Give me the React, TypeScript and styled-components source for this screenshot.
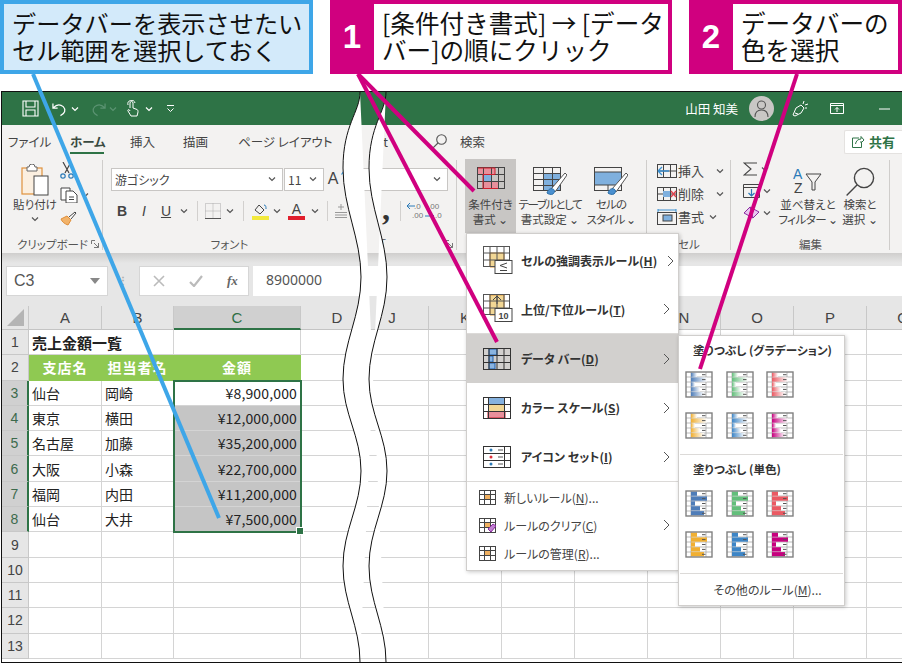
import React from "react";
import styled, { createGlobalStyle, css } from "styled-components";

const Global = createGlobalStyle`
  html, body { margin: 0; padding: 0; background: #fff; }
  body { font-family: "Noto Sans CJK JP", "Noto Sans", sans-serif; }
  * { box-sizing: border-box; }
  svg { flex: none; }
`;

const Page = styled.div`
  position: relative;
  width: 902px;
  height: 663px;
  overflow: hidden;
  background: #fff;
`;

const CalloutBar = styled.header`
  display: flex;
  gap: 17px;
  height: 74px;
  margin-bottom: 17px;
`;
const Note = styled.div`
  width: 313px;
  border: 4px solid #3ea6e8;
  background: #d3eafa;
  padding: 5px 0 0 8px;
  font-size: 24.2px;
  line-height: 27px;
  color: #111;
  white-space: nowrap;
`;
const Step = styled.div<{ $w: number }>`
  width: ${(p) => p.$w}px;
  display: flex;
  background: #d0007f;
  padding: 4px 4px 4px 0;
`;
const StepNum = styled.div`
  width: 44px;
  display: flex;
  align-items: center;
  justify-content: center;
  color: #fff;
  font: 700 33px "Liberation Sans", sans-serif;
`;
const StepText = styled.div`
  flex: 1;
  background: #fff;
  padding: 5px 0 0 8px;
  font-size: 24.6px;
  line-height: 27px;
  color: #111;
  white-space: nowrap;
  overflow: hidden;
`;

const Window = styled.main`
  display: flex;
  height: 572px;
  padding-left: 1px;
`;
const Pane = styled.section<{ $left?: boolean }>`
  display: flex;
  flex-direction: column;
  height: 572px;
  border-top: 1px solid #111;
  border-bottom: 1px solid #111;
  overflow: hidden;
  color: #444;
  font-feature-settings: "palt";
  ${(p) =>
    p.$left
      ? css`
          width: 355px;
          border-left: 1px solid #111;
        `
      : css`
          width: 546px;
        `}
`;
const TitleBar = styled.div<{ $end?: boolean }>`
  height: 33px;
  flex: none;
  background: #2e7346;
  color: #fff;
  display: flex;
  align-items: center;
  justify-content: ${(p) => (p.$end ? "flex-end" : "flex-start")};
  padding-left: ${(p) => (p.$end ? 0 : 19)}px;
`;
const TitleSlot = styled.span<{ $w: number; $ml?: number }>`
  width: ${(p) => p.$w}px;
  margin-left: ${(p) => p.$ml ?? 0}px;
  display: flex;
  justify-content: center;
  align-items: center;
  flex: none;
`;
const Flip = styled.span`
  display: flex;
  transform: scaleX(-1);
`;
const UserName = styled.span`
  font-size: 12.5px;
  margin-right: 11px;
  white-space: nowrap;
`;
const Avatar = styled.span`
  width: 25px;
  height: 25px;
  border-radius: 50%;
  background: #c9c7c5;
  display: flex;
  align-items: center;
  justify-content: center;
  margin-right: 10px;
`;
const TabRow = styled.nav<{ $pad: number }>`
  height: 33px;
  flex: none;
  display: flex;
  align-items: center;
  background: #f3f2f1;
  padding-left: ${(p) => p.$pad}px;
  font-size: 12.5px;
  white-space: nowrap;
`;
const Tab = styled.span<{ $w?: number; $active?: boolean }>`
  position: relative;
  width: ${(p) => (p.$w ? `${p.$w}px` : "auto")};
  flex: none;
  height: 33px;
  line-height: 33px;
  ${(p) =>
    p.$active &&
    css`
      font-weight: 700;
      color: #3a4a40;
      &::after {
        content: "";
        position: absolute;
        left: 0;
        bottom: 4px;
        width: 34px;
        height: 2px;
        background: #2e7346;
      }
    `}
`;
const TabIcon = styled.span`
  display: inline-flex;
  height: 33px;
  align-items: center;
`;
const ShareButton = styled.button`
  margin-left: auto;
  width: 58px;
  height: 24px;
  border: 1px solid #e4e2e0;
  border-right: 0;
  border-radius: 2px 0 0 2px;
  background: #fff;
  color: #2e7346;
  font: 700 13px "Noto Sans CJK JP", sans-serif;
  display: flex;
  align-items: center;
  gap: 4px;
  padding: 0 0 0 6px;
`;

const Ribbon = styled.div`
  height: 95px;
  flex: none;
  display: flex;
  background: #f3f2f1;
`;
const Group = styled.div<{ $w: number; $sep?: boolean }>`
  position: relative;
  width: ${(p) => p.$w}px;
  flex: none;
  display: flex;
  flex-direction: column;
  ${(p) =>
    p.$sep &&
    css`
      &::after {
        content: "";
        position: absolute;
        right: 0;
        top: 2px;
        bottom: 3px;
        width: 1px;
        background: #cfcdcb;
      }
    `}
`;
const GroupBody = styled.div<{ $pad?: number }>`
  flex: 1;
  display: flex;
  min-height: 0;
  padding-left: ${(p) => p.$pad ?? 0}px;
`;
const GroupLabel = styled.div<{ $pad?: number }>`
  height: 18px;
  font-size: 11.5px;
  line-height: 18px;
  text-align: ${(p) => (p.$pad ? "left" : "center")};
  padding-left: ${(p) => p.$pad ?? 0}px;
  position: relative;
  color: #555;
  flex: none;
`;
const Launcher = styled.span`
  position: absolute;
  right: 4px;
  top: 5px;
  display: flex;
`;
const PasteCol = styled.div`
  width: 50px;
  margin-left: 8px;
  display: flex;
  flex-direction: column;
  align-items: center;
  padding-top: 6px;
  font-size: 11.5px;
  line-height: 15px;
`;
const PasteLabel = styled.span`
  margin-top: 1px;
  margin-bottom: 3px;
  white-space: nowrap;
`;
const ToolCol = styled.div<{ $gap?: number; $top?: number; $w?: number }>`
  display: flex;
  flex-direction: column;
  width: ${(p) => (p.$w ? `${p.$w}px` : "auto")};
  flex: none;
  gap: ${(p) => p.$gap ?? 6}px;
  padding-top: ${(p) => p.$top ?? 5}px;
`;
const ToolLine = styled.div`
  display: flex;
  align-items: center;
  gap: 3px;
`;
const Rows = styled.div`
  display: flex;
  flex-direction: column;
  padding-top: 10px;
  gap: 10px;
`;
const RowLine = styled.div`
  display: flex;
  align-items: center;
  height: 22px;
`;
const Combo = styled.div<{ $w: number }>`
  width: ${(p) => p.$w}px;
  height: 23px;
  background: #fff;
  border: 1px solid #c8c6c4;
  display: flex;
  align-items: center;
  justify-content: space-between;
  padding: 0 6px 0 3px;
  font-size: 12px;
  color: #444;
  flex: none;
  margin-right: 1px;
`;
const Tool = styled.span<{ $w: number; $bold?: boolean; $italic?: boolean; $under?: boolean }>`
  width: ${(p) => p.$w}px;
  flex: none;
  display: flex;
  align-items: center;
  justify-content: center;
  font: ${(p) => (p.$italic ? "italic " : "")}${(p) => (p.$bold ? 700 : 400)} 14px "Liberation Sans", sans-serif;
  text-decoration: ${(p) => (p.$under ? "underline" : "none")};
  color: #444;
`;
const ToolSep = styled.span`
  width: 12px;
  flex: none;
  display: flex;
  justify-content: center;
  &::before {
    content: "";
    width: 1px;
    height: 20px;
    background: #d2d0ce;
  }
`;
const BigButton = styled.div<{ $w: number; $on?: boolean }>`
  width: ${(p) => p.$w}px;
  height: 74px;
  flex: none;
  margin-top: 1px;
  display: flex;
  flex-direction: column;
  align-items: center;
  padding-top: 8px;
  background: ${(p) => (p.$on ? "#c8c6c4" : "transparent")};
  font-size: 11.5px;
  line-height: 15px;
  white-space: nowrap;
  text-align: center;
`;
const BigIcon = styled.span`
  height: 30px;
  display: flex;
  align-items: flex-start;
`;
const Tight = styled.span<{ $s: number }>`
  letter-spacing: ${(p) => p.$s}px;
`;
const StackRow = styled.div`
  display: flex;
  align-items: center;
  height: 23px;
  font-size: 13px;
  white-space: nowrap;
  gap: 1px;
`;
const Stack = styled.div`
  display: flex;
  flex-direction: column;
  padding-top: 1px;
`;
const GlyphA = styled.span`
  font: 400 16px "Liberation Sans", sans-serif;
  color: #444;
`;
const Comma = styled.span`
  font: 700 32px "Liberation Serif", serif;
  color: #333;
  line-height: 18px;
  height: 22px;
  margin-left: 22px;
  width: 16px;
  text-align: center;
`;

const FormulaBar = styled.div<{ $left?: boolean }>`
  height: 53px;
  flex: none;
  display: flex;
  gap: 4px;
  padding: 13px 0 0 ${(p) => (p.$left ? 4 : 0)}px;
  background: linear-gradient(#cfcecd 0, #e6e6e6 10px);
`;
const NameBox = styled.div`
  width: 102px;
  height: 30px;
  flex: none;
  background: #fff;
  border: 1px solid #d6d6d6;
  display: flex;
  align-items: center;
  justify-content: space-between;
  padding: 0 7px;
  font: 400 16px "Liberation Sans", sans-serif;
  color: #555;
`;
const Grip = styled.span`
  width: 23px;
  flex: none;
  text-align: center;
  color: #aaa;
  font: 700 10px/30px "Liberation Sans", sans-serif;
  letter-spacing: 1px;
`;
const FxBox = styled.div`
  width: 110px;
  height: 30px;
  flex: none;
  background: #fff;
  border: 1px solid #d6d6d6;
  display: flex;
  align-items: center;
  padding-left: 13px;
  gap: 24px;
`;
const FxText = styled.span`
  font: italic 700 13px "Liberation Serif", serif;
  color: #666;
`;
const FormulaInput = styled.div`
  flex: 1;
  height: 30px;
  background: #fff;
  padding-left: 13px;
  font: 400 14px/28px "Noto Sans", sans-serif;
  color: #555;
`;

const SheetWrap = styled.div`
  position: relative;
  flex: 1;
  min-height: 0;
`;
const Sheet = styled.div<{ $cols: string }>`
  display: grid;
  grid-template-columns: ${(p) => p.$cols};
  grid-template-rows: 24px repeat(13, 25.3px);
  background: #fff;
`;
const ColHead = styled.div<{ $sel?: boolean }>`
  display: flex;
  align-items: center;
  justify-content: center;
  background: ${(p) => (p.$sel ? "#d0d0d0" : "#e6e6e6")};
  border-right: 1px solid #c8c8c8;
  border-bottom: ${(p) => (p.$sel ? "2px solid #2e7346" : "1px solid #c4c4c4")};
  font: 400 15px "Liberation Sans", sans-serif;
  color: ${(p) => (p.$sel ? "#2e6f45" : "#444")};
`;
const Corner = styled.div`
  background: #e6e6e6;
  border-right: 1px solid #c8c8c8;
  border-bottom: 1px solid #c4c4c4;
  display: flex;
  align-items: flex-end;
  justify-content: flex-end;
  padding: 0 4px 3px 0;
`;
const RowHead = styled.div<{ $sel?: boolean }>`
  display: flex;
  align-items: center;
  justify-content: center;
  background: ${(p) => (p.$sel ? "#d0d0d0" : "#e6e6e6")};
  border-bottom: 1px solid #c8c8c8;
  border-right: ${(p) => (p.$sel ? "2px solid #2e7346" : "1px solid #c8c8c8")};
  font: 400 14px "Liberation Sans", sans-serif;
  color: ${(p) => (p.$sel ? "#3c6a4c" : "#444")};
`;
const Cell = styled.div<{
  $tone?: "plain" | "head" | "sel";
  $right?: boolean;
  $bold?: boolean;
  $span?: number;
}>`
  display: flex;
  align-items: center;
  padding: 0 3px;
  white-space: nowrap;
  font-size: 14px;
  font-weight: ${(p) => (p.$bold || p.$tone === "head" ? 700 : 400)};
  color: ${(p) => (p.$tone === "head" ? "#fff" : "#222")};
  background: ${(p) => (p.$tone === "head" ? "#8fc952" : p.$tone === "sel" ? "#c5c5c5" : "#fff")};
  border-right: 1px solid ${(p) => (p.$tone === "head" ? "transparent" : "#d4d4d4")};
  border-bottom: 1px solid ${(p) => (p.$tone === "head" ? "transparent" : "#d4d4d4")};
  justify-content: ${(p) => (p.$right ? "flex-end" : p.$tone === "head" ? "center" : "flex-start")};
  ${(p) => p.$tone === "head" && "letter-spacing: 1px;"}
  ${(p) => p.$right && "letter-spacing: 0.15px;"}
  ${(p) => p.$span && `grid-column: span ${p.$span}; font-size: 15px;`}
  font-feature-settings: normal;
`;
const Selection = styled.div`
  position: absolute;
  left: 171px;
  top: 74px;
  width: 129px;
  height: 153px;
  border: 2px solid #2e7346;
  pointer-events: none;
  &::after {
    content: "";
    position: absolute;
    right: -4px;
    bottom: -4px;
    width: 6px;
    height: 6px;
    background: #2e7346;
    border: 1px solid #fff;
  }
`;

const Menu = styled.div`
  position: absolute;
  left: 466px;
  top: 233px;
  width: 213px;
  height: 338px;
  background: #fff;
  border: 1px solid #d0cecc;
  box-shadow: 1px 1px 4px rgba(0, 0, 0, 0.22);
  padding-top: 2px;
  color: #333;
  font-feature-settings: "palt";
`;
const BigItem = styled.div<{ $on?: boolean; $line?: boolean }>`
  height: 49px;
  display: flex;
  align-items: center;
  padding: 0 8px 0 16px;
  gap: 10px;
  font-size: 12px;
  font-weight: 700;
  background: ${(p) => (p.$on ? "#d2d0ce" : "#fff")};
  white-space: nowrap;
  ${(p) => p.$line && "border-bottom: 1px solid #dcdad8;"}
`;
const ItemText = styled.span`
  flex: 1;
`;
const MenuRule = styled.div`
  height: 1px;
  background: #dcdad8;
`;
const SmallItem = styled.div`
  height: 28px;
  display: flex;
  align-items: center;
  padding: 0 8px 0 12px;
  gap: 8px;
  font-size: 12px;
  color: #444;
  white-space: nowrap;
`;
const SmallList = styled.div`
  padding-top: 1px;
`;
const Gallery = styled.div`
  position: absolute;
  left: 678px;
  top: 335px;
  width: 167px;
  height: 271px;
  background: #fff;
  border: 1px solid #d0cecc;
  box-shadow: 1px 1px 4px rgba(0, 0, 0, 0.22);
  color: #333;
  font-feature-settings: "palt";
`;
const GalleryTitle = styled.div`
  height: 29px;
  padding-left: 14px;
  font-size: 11.6px;
  font-weight: 700;
  line-height: 28px;
  white-space: nowrap;
`;
const Swatches = styled.div`
  display: grid;
  grid-template-columns: repeat(3, 28px);
  grid-auto-rows: 27px;
  column-gap: 12.5px;
  row-gap: 14px;
  padding: 6px 0 0 6px;
  height: 89px;
`;
const GalleryRule = styled.div`
  height: 1px;
  background: #dcdad8;
  margin: 0 1px;
`;
const GalleryMore = styled.div`
  height: 31px;
  text-align: center;
  padding-left: 12px;
  font-size: 12px;
  line-height: 31px;
  color: #444;
  white-space: nowrap;
`;
const Layer = styled.svg`
  position: absolute;
  left: 0;
  top: 0;
  pointer-events: none;
`;
const WideSvg = styled.svg`
  margin-right: -2px;
`;

/* ---------- icons ---------- */
const Chev = ({ c = "#555", s = 8 }: { c?: string; s?: number }) => (
  <svg width={s} height={s} viewBox="0 0 8 8" fill="none" stroke={c} strokeWidth="1.2">
    <path d="M1 2.5 4 5.5 7 2.5" />
  </svg>
);
const ChevR = () => (
  <svg width="7" height="12" viewBox="0 0 7 12" fill="none" stroke="#555" strokeWidth="1">
    <path d="M1 1 6 6 1 11" />
  </svg>
);
const Save = () => (
  <svg width="17" height="17" viewBox="0 0 17 17" fill="none" stroke="#fff" strokeWidth="1.1">
    <path d="M1 1h15v15H1zM4 1v6h9V1M4 16v-6h9v6" />
  </svg>
);
const Undo = ({ c = "#fff" }: { c?: string }) => (
  <svg width="15" height="16" viewBox="0 0 16 16" fill="none" stroke={c} strokeWidth="1.3">
    <path d="M1 2v5h5M1.5 6.5C5 3 9 3 12 5.500C15 8.500 14 13 9 15" />
  </svg>
);
const Touch = () => (
  <svg width="13" height="17" viewBox="0 0 13 17" fill="none" stroke="#fff" strokeWidth="1">
    <path d="M4 8V3a1.500 1.500 0 0 1 3 0v5l4 1.500c1 .5 1 1.500 1 2.500l-1 4H5L2 11c-.6-1 .5-2 1.500-1L4 11M2 5A3 3 0 0 1 9 3" />
  </svg>
);
const Customize = () => (
  <svg width="9" height="9" viewBox="0 0 9 9" fill="none" stroke="#fff" strokeWidth="1">
    <path d="M1 1.500h7M1.500 4.500 4.500 7.500 7.500 4.500" />
  </svg>
);
const Person = () => (
  <svg width="15" height="17" viewBox="0 0 15 17" fill="none" stroke="#555" strokeWidth="1.100">
    <circle cx="7.500" cy="5" r="4" />
    <path d="M1 17c0-5 3-7 6.500-7S14 12 14 17" />
  </svg>
);
const Pen = () => (
  <svg width="17" height="18" viewBox="0 0 17 18" fill="none" stroke="#fff" strokeWidth="1">
    <path d="M1 15 4 8l5-3 3 3-3 5-6 3zM3 13l3 1M12 1l-1 3M16 4l-3 1M15 8h-2" />
  </svg>
);
const Display = () => (
  <svg width="14" height="11" viewBox="0 0 14 11" fill="none" stroke="#fff" strokeWidth="1">
    <path d="M.5.500h13v10H.500zM.5 2.500h13M7 9V4.500M5 6.500l2-2 2 2" />
  </svg>
);
const Minus = () => (
  <svg width="11" height="2" viewBox="0 0 11 2">
    <path d="M0 1h11" stroke="#fff" />
  </svg>
);
const Lens = ({ s = 15, c = "#555", w = 1.100 }: { s?: number; c?: string; w?: number }) => (
  <svg width={s} height={s} viewBox="0 0 15 15" fill="none" stroke={c} strokeWidth={w}>
    <circle cx="9.500" cy="5.500" r="4.800" />
    <path d="M6 9 .8 14.200" />
  </svg>
);
const ShareIcon = () => (
  <svg width="14" height="14" viewBox="0 0 14 14" fill="none" stroke="#2e7346" strokeWidth="1">
    <path d="M8 3H1.500v9.500h9V8M4.500 9C5 6 7 4 10 4V1.500L13 5l-3 3V6" />
  </svg>
);
const PasteIcon = () => (
  <svg width="28" height="32" viewBox="0 0 28 32" fill="none">
    <rect x="1" y="4" width="20" height="26" fill="#fbefe0" stroke="#e0913c" strokeWidth="1.200" />
    <path d="M6 3h2a3 3 0 0 1 6 0h2v4H6z" fill="#fff" stroke="#666" />
    <rect x="13" y="12" width="14" height="19" fill="#fff" stroke="#444" />
  </svg>
);
const CutIcon = () => (
  <svg width="14" height="17" viewBox="0 0 14 17" fill="none" stroke="#444" strokeWidth="1.200">
    <path d="M3 0l6 11M11 0 5 11" />
    <circle cx="3" cy="14" r="2.200" stroke="#2a7ab8" />
    <circle cx="11" cy="14" r="2.200" stroke="#2a7ab8" />
  </svg>
);
const CopyIcon = () => (
  <svg width="18" height="16" viewBox="0 0 18 16" fill="#fff" stroke="#444">
    <path d="M1 1h9v12H1z" />
    <path d="M6 4h7l4 4v8H6zM9 10h5M9 12.500h5" />
  </svg>
);
const Brush = () => (
  <svg width="17" height="15" viewBox="0 0 17 15" fill="none">
    <path d="M1 8 7 5l4 4-3 5C5 13 2 11 1 8z" fill="#f2b36a" stroke="#df8e39" />
    <path d="m9 6 6-5 1 1-5 6" stroke="#444" fill="#fff" />
  </svg>
);
const GrowCaret = () => (
  <svg width="6" height="5" viewBox="0 0 6 5" fill="none" stroke="#2a8fd8" strokeWidth="1.100">
    <path d="M.5 4.500 3 1l2.500 3.500" />
  </svg>
);
const CaretTop = styled.span`
  display: flex;
  align-self: flex-start;
  margin-top: 2px;
`;
const BorderIcon = () => (
  <svg width="16" height="16" viewBox="0 0 16 16" fill="none" stroke="#aaa" strokeDasharray="1 1">
    <path d="M.5.500h15v15H.500zM8 .5v15M.5 8h15" />
    <path d="M0 15.500h16" stroke="#555" strokeDasharray="none" />
  </svg>
);
const FillIcon = () => (
  <svg width="17" height="17" viewBox="0 0 17 17" fill="none" stroke="#444">
    <path d="m3 7 4-5 5 5-4 4z" />
    <path d="M12 2c2 0 2 2 2 4" stroke="#2a7ab8" />
    <rect x="0" y="13" width="17" height="4" fill="#f2e93c" stroke="none" />
  </svg>
);
const FontColor = () => (
  <svg width="17" height="18" viewBox="0 0 17 18">
    <text x="8.500" y="12" textAnchor="middle" fontSize="14" fontFamily="Liberation Sans" fill="#444">A</text>
    <rect x="0" y="14" width="17" height="4" fill="#e01f2d" />
  </svg>
);
const AlignIcon = () => (
  <svg width="14" height="16" viewBox="0 0 14 16" stroke="#999" fill="none">
    <path d="M1 9.500h12M1 12h12M1 14.500h12M7 1v6M4 4h6" />
  </svg>
);
const Decimals = () => (
  <svg width="36" height="20" viewBox="0 0 36 20" fontFamily="Liberation Sans" fontSize="8" fill="#777">
    <path d="M9 5H1M1 5l3-3M1 5l3 3" stroke="#2a7ab8" fill="none" />
    <text x="8" y="8">.0</text>
    <text x="6" y="17">.00</text>
    <text x="22" y="8">.00</text>
    <path d="M19 15h9M28 15l-3-3M28 15l-3 3" stroke="#2a7ab8" fill="none" />
    <text x="29" y="17">.0</text>
  </svg>
);
const Launch = () => (
  <svg width="8" height="8" viewBox="0 0 8 8" fill="none" stroke="#777">
    <path d="M.5 4V.5H4M7.500 7.500 3 3M3 7.500h4.500V3" />
  </svg>
);

const Grid = ({ w, h, cols, rows, c = "#444" }: { w: number; h: number; cols: number[]; rows: number[]; c?: string }) => (
  <>
    <rect x=".5" y=".5" width={w - 1} height={h - 1} fill="none" stroke={c} />
    {cols.map((x) => (
      <path key={`c${x}`} d={`M${x} 0V${h}`} stroke={c} />
    ))}
    {rows.map((y) => (
      <path key={`r${y}`} d={`M0 ${y}H${w}`} stroke={c} />
    ))}
  </>
);
const CondIcon = () => (
  <svg width="28" height="22" viewBox="0 0 28 22">
    <rect x="1" y="1" width="17" height="6.500" fill="#e88f9b" />
    <rect x="6" y="8" width="8" height="6.500" fill="#7fb0de" />
    <rect x="6" y="15" width="15" height="6" fill="#e88f9b" />
    <Grid w={28} h={22} cols={[6.5, 14.5, 21.5]} rows={[7.5, 14.5]} />
    <path d="M1 1h17v6.500H6v14h15" fill="none" stroke="#d01f2d" />
  </svg>
);
const BrushOver = () => (
  <g>
    <path d="M18 22 32 6l2 2-12 17z" fill="#fff" stroke="#555" />
    <path d="M14 26c1-4 4-5 6-4 2 1 2 3 0 5-2 1-5 0-6-1z" fill="#4a90d0" stroke="#2a6ea8" />
  </g>
);
const TableIcon = () => (
  <svg width="34" height="30" viewBox="0 0 34 30">
    <rect x="10" y="7" width="18" height="17" fill="#7fb0de" />
    <Grid w={28} h={24} cols={[10.5, 19.5]} rows={[6.5, 12.5, 18.5]} />
    <BrushOver />
  </svg>
);
const StyleIcon = () => (
  <svg width="34" height="30" viewBox="0 0 34 30">
    <rect x="1" y="5" width="26" height="13" fill="#7fb0de" />
    <rect x=".5" y=".5" width="27" height="23" fill="none" stroke="#444" />
    <path d="M0 5h28M0 18h28M14 18v6" stroke="#444" />
    <BrushOver />
  </svg>
);
const InsertIcon = () => (
  <svg width="20" height="14" viewBox="0 0 20 14">
    <Grid w={20} h={14} cols={[6.5, 13.5]} rows={[7]} />
    <path d="M12 7H1M1 7l4-4M1 7l4 4" stroke="#3a8fd0" fill="none" strokeWidth="1.300" />
  </svg>
);
const DeleteIcon = () => (
  <svg width="20" height="14" viewBox="0 0 20 14">
    <Grid w={20} h={14} cols={[6.5, 13.500]} rows={[7]} />
    <rect x="6" y="4" width="7" height="6" fill="#7fb0de" />
    <path d="m14 4 5 6M19 4l-5 6" stroke="#e0404c" strokeWidth="1.300" />
  </svg>
);
const FormatIcon = () => (
  <svg width="20" height="16" viewBox="0 0 20 16">
    <path d="M1 1h18M1 0v3M19 0v3" stroke="#3a8fd0" fill="none" />
    <rect x=".5" y="3.500" width="19" height="12" fill="none" stroke="#444" />
    <rect x="6" y="6" width="9" height="6" fill="#7fb0de" stroke="#444" />
  </svg>
);
const Sigma = () => (
  <svg width="15" height="14" viewBox="0 0 15 14" fill="none" stroke="#444" strokeWidth="1.100">
    <path d="M14 1H1l7 6-7 6h13" />
  </svg>
);
const FillDown = () => (
  <svg width="17" height="14" viewBox="0 0 17 14" fill="none" stroke="#444">
    <path d="M.5.500h16v13H.500zM0 3.500h17" />
    <path d="M8.500 5v7M5.500 9l3 3 3-3" stroke="#2a7ab8" strokeWidth="1.200" />
  </svg>
);
const Eraser = () => (
  <svg width="17" height="13" viewBox="0 0 17 13" fill="none" stroke="#8a2aa0">
    <path d="m1 7 6-6 9 5-6 6z" fill="#e8c8f0" />
    <path d="M7 1l3 11" />
  </svg>
);
const SortIcon = () => (
  <svg width="30" height="28" viewBox="0 0 30 28" fontFamily="Liberation Sans" fontSize="14">
    <text x="0" y="12" fill="#2a7ab8">A</text>
    <text x="1" y="26" fill="#444">Z</text>
    <path d="M13 7h15l-6 8v8h-3v-8z" fill="none" stroke="#444" />
  </svg>
);
const Table10 = ({ kind }: { kind: "le" | "ten" }) => (
  <WideSvg width="30" height="30" viewBox="0 0 30 30">
    {kind === "le" ? (
      <path d="M7 7h14v7H14v7H7z" fill="#f2d795" stroke="#e09a3c" />
    ) : (
      <path d="M7 1h14v20H7z" fill="#f2d795" stroke="#e09a3c" />
    )}
    <Grid w={27} h={21} cols={[7, 14, 21]} rows={[7, 14]} c="#555" />
    <rect x="12" y="14.500" width="17" height="13" fill="#fff" stroke="#444" />
    {kind === "le" ? (
      <path d="M24 17l-7 2.500 7 2.500M17 24.500h7" stroke="#444" fill="none" />
    ) : (
      <>
        <path d="M14 10V2M10 6l4-4 4 4" stroke="#444" fill="none" />
        <text x="20.500" y="25" textAnchor="middle" fontSize="9" fontFamily="Liberation Sans" fill="#444">10</text>
      </>
    )}
  </WideSvg>
);
const BarIcon = () => (
  <svg width="28" height="22" viewBox="0 0 28 22">
    <path d="M6 1h8v6H6zM6 8h4v6H6zM6 15h6v6H6z" fill="#8ab4e0" stroke="#1f5fae" />
    <Grid w={28} h={22} cols={[6, 14, 21]} rows={[7.5, 14.500]} c="#333" />
  </svg>
);
const ScaleIcon = () => (
  <svg width="28" height="22" viewBox="0 0 28 22">
    <rect x="5" y="1" width="17" height="6.500" fill="#86b2df" />
    <rect x="5" y="7.500" width="17" height="7" fill="#f2d795" />
    <rect x="5" y="14.500" width="17" height="6.500" fill="#e88f9b" stroke="#d01f2d" />
    <Grid w={28} h={22} cols={[5.5, 21.5]} rows={[7.500, 14.500]} c="#333" />
  </svg>
);
const SetIcon = () => (
  <svg width="28" height="22" viewBox="0 0 28 22">
    <Grid w={28} h={22} cols={[21.500]} rows={[7.500, 14.500]} c="#333" />
    <circle cx="8" cy="4" r="1.500" fill="#2a7ab8" />
    <circle cx="8" cy="11" r="1.500" fill="#e0303c" />
    <circle cx="8" cy="18" r="1.500" fill="#2a7ab8" />
    <path d="M15 4h5M15 11h5M15 18h5" stroke="#555" />
  </svg>
);
const SmallIcon = ({ kind }: { kind: "new" | "clear" | "manage" }) => (
  <svg width="17" height="15" viewBox="0 0 17 15">
    <rect x="5" y="4.500" width="7" height="5" fill="#f0b060" />
    <rect x=".5" y=".5" width="16" height="14" fill="none" stroke="#444" />
    <path d="M5.500 0v15M11.500 0v15M0 4.500h17M0 9.500h17" stroke="#444" />
    {kind === "clear" && <path d="m9 11 5-5 3 2-5 6z" fill="#c080d0" stroke="#8a2aa0" />}
  </svg>
);

const BAR_WIDTHS = [6, 16, 4, 9, 13];
const DataBarIcon = ({ id, color, gradient }: { id: string; color: string; gradient?: boolean }) => (
  <svg width="28" height="27" viewBox="0 0 28 27">
    {gradient && (
      <defs>
        <linearGradient id={id}>
          <stop offset="0" stopColor={color} />
          <stop offset="1" stopColor="#fff" />
        </linearGradient>
      </defs>
    )}
    <rect x="1" y="1" width="26" height="25" fill="#fff" />
    {[6, 21].map((x) => (
      <path key={x} d={`M${x} 1V26`} stroke="#aaa" strokeWidth=".8" />
    ))}
    {[6, 11, 16, 21].map((y) => (
      <path key={y} d={`M1 ${y}H27`} stroke="#aaa" strokeWidth=".8" />
    ))}
    {BAR_WIDTHS.map((b, i) => (
      <rect key={i} x="6" y={1.5 + i * 4.9} width={b} height="4.300" fill={gradient ? `url(#${id})` : color} />
    ))}
    {BAR_WIDTHS.map((_, i) => (
      <path key={i} d={`M17 ${3.7 + i * 4.9}h3.500`} stroke="#555" strokeWidth="1" />
    ))}
    <rect x="1" y="1" width="26" height="25" fill="none" stroke="#808080" strokeWidth="1.400" />
  </svg>
);

const wave = (o: number) =>
  `M${360 + o} 92C${360 + o} 112 ${343 + o} 125 ${343 + o} 168C${343 + o} 208 ${361 + o} 238 ${361 + o} 277C${361 + o} 316 ${343 + o} 342 ${343 + o} 379C${343 + o} 414 ${361 + o} 436 ${361 + o} 471C${361 + o} 506 ${343 + o} 530 ${343 + o} 566C${343 + o} 602 ${360 + o} 626 ${360 + o} 662`;
const waveBack =
  "L386 92C386 112 369 125 369 168C369 208 387 238 387 277C387 316 369 342 369 379C369 414 387 436 387 471C387 506 369 530 369 566C369 602 386 626 386 662Z";

const ROWS: [string, string, string][] = [
  ["仙台", "岡崎", "¥8,900,000"],
  ["東京", "横田", "¥12,000,000"],
  ["名古屋", "加藤", "¥35,200,000"],
  ["大阪", "小森", "¥22,700,000"],
  ["福岡", "内田", "¥11,200,000"],
  ["仙台", "大井", "¥7,500,000"],
];
const RIGHT_COLS = ["J", "K", "", "", "N", "O", "P", "Q"];
const GRADIENTS = ["#4f7db8", "#63be7b", "#ea5a63", "#f0af32", "#3d85c6", "#c6007e"];

const LeftSheet = () => (
  <SheetWrap>
    <Sheet $cols="27px 73px 72px 127px 73px">
      <Corner>
        <svg width="17" height="17" viewBox="0 0 17 17">
          <path d="M17 0v17H0z" fill="#b4b4b4" />
        </svg>
      </Corner>
      <ColHead>A</ColHead>
      <ColHead>B</ColHead>
      <ColHead $sel>C</ColHead>
      <ColHead>D</ColHead>

      <RowHead>1</RowHead>
      <Cell $bold $span={2}>売上金額一覧</Cell>
      <Cell />
      <Cell />

      <RowHead>2</RowHead>
      <Cell $tone="head">支店名</Cell>
      <Cell $tone="head">担当者名</Cell>
      <Cell $tone="head">金額</Cell>
      <Cell />

      {ROWS.map((r, i) => (
        <React.Fragment key={i}>
          <RowHead $sel>{i + 3}</RowHead>
          <Cell>{r[0]}</Cell>
          <Cell>{r[1]}</Cell>
          <Cell $right $tone={i === 0 ? "plain" : "sel"}>{r[2]}</Cell>
          <Cell />
        </React.Fragment>
      ))}

      {[9, 10, 11, 12, 13].map((n) => (
        <React.Fragment key={n}>
          <RowHead>{n}</RowHead>
          <Cell />
          <Cell />
          <Cell />
          <Cell />
        </React.Fragment>
      ))}
    </Sheet>
    <Selection />
  </SheetWrap>
);

const RightSheet = () => (
  <SheetWrap>
    <Sheet $cols="repeat(8, 73px)">
      {RIGHT_COLS.map((c, i) => (
        <ColHead key={i}>{c}</ColHead>
      ))}
      {Array.from({ length: 13 * 8 }, (_, i) => (
        <Cell key={i} />
      ))}
    </Sheet>
  </SheetWrap>
);

export default function App() {
  return (
    <Page>
      <Global />
      <CalloutBar>
        <Note>
          データバーを表示させたい
          <br />
          セル範囲を選択しておく
        </Note>
        <Step $w={342}>
          <StepNum>1</StepNum>
          <StepText>
            [条件付き書式] → [データ
            <br />
            バー]の順にクリック
          </StepText>
        </Step>
        <Step $w={213}>
          <StepNum>2</StepNum>
          <StepText>
            データバーの
            <br />
            色を選択
          </StepText>
        </Step>
      </CalloutBar>

      <Window>
        <Pane $left>
          <TitleBar>
            <TitleSlot $w={18}><Save /></TitleSlot>
            <TitleSlot $w={20} $ml={10}><Undo /></TitleSlot>
            <TitleSlot $w={12}><Chev c="#fff" /></TitleSlot>
            <TitleSlot $w={20} $ml={7}><Flip><Undo c="#5b9372" /></Flip></TitleSlot>
            <TitleSlot $w={10}><Chev c="#5b9372" /></TitleSlot>
            <TitleSlot $w={20} $ml={4}><Touch /></TitleSlot>
            <TitleSlot $w={10} $ml={2}><Chev c="#fff" /></TitleSlot>
            <TitleSlot $w={20} $ml={6}><Customize /></TitleSlot>
          </TitleBar>
          <TabRow $pad={6}>
            <Tab $w={62}>ファイル</Tab>
            <Tab $w={60} $active>ホーム</Tab>
            <Tab $w={53}>挿入</Tab>
            <Tab $w={55}>描画</Tab>
            <Tab>ページ レイアウト</Tab>
          </TabRow>
          <Ribbon>
            <Group $w={101} $sep>
              <GroupBody>
                <PasteCol>
                  <PasteIcon />
                  <PasteLabel>貼り付け</PasteLabel>
                  <Chev />
                </PasteCol>
                <ToolCol $gap={8} $top={4}>
                  <ToolLine><CutIcon /></ToolLine>
                  <ToolLine><CopyIcon /><Chev /></ToolLine>
                  <ToolLine><Brush /></ToolLine>
                </ToolCol>
              </GroupBody>
              <GroupLabel>
                クリップボード
                <Launcher><Launch /></Launcher>
              </GroupLabel>
            </Group>
            <Group $w={253}>
              <GroupBody $pad={8}>
                <Rows>
                  <RowLine>
                    <Combo $w={172}>游ゴシック<Chev /></Combo>
                    <Combo $w={40}>11<Chev /></Combo>
                    <Tool $w={16}><GlyphA>A</GlyphA></Tool>
                    <CaretTop><GrowCaret /></CaretTop>
                  </RowLine>
                  <RowLine>
                    <Tool $w={22} $bold>B</Tool>
                    <Tool $w={22} $italic>I</Tool>
                    <Tool $w={22} $under>U</Tool>
                    <Tool $w={14}><Chev /></Tool>
                    <ToolSep />
                    <Tool $w={20}><BorderIcon /></Tool>
                    <Tool $w={14}><Chev /></Tool>
                    <ToolSep />
                    <Tool $w={22}><FillIcon /></Tool>
                    <Tool $w={12}><Chev /></Tool>
                    <Tool $w={26}><FontColor /></Tool>
                    <Tool $w={12}><Chev /></Tool>
                    <ToolSep />
                    <Tool $w={16}><AlignIcon /></Tool>
                  </RowLine>
                </Rows>
              </GroupBody>
              <GroupLabel>フォント</GroupLabel>
            </Group>
          </Ribbon>
          <FormulaBar $left>
            <NameBox>
              C3
              <svg width="10" height="6" viewBox="0 0 10 6"><path d="M0 0h10L5 6z" fill="#888" /></svg>
            </NameBox>
            <Grip>⋮</Grip>
            <FxBox>
              <svg width="12" height="12" viewBox="0 0 12 12" stroke="#bbb" strokeWidth="1.600"><path d="m1 1 10 10M11 1 1 11" /></svg>
              <svg width="14" height="12" viewBox="0 0 14 12" fill="none" stroke="#bbb" strokeWidth="2.200"><path d="m1 7 4 4 8-10" /></svg>
              <FxText>fx</FxText>
            </FxBox>
            <FormulaInput>8900000</FormulaInput>
          </FormulaBar>
          <LeftSheet />
        </Pane>

        <Pane>
          <TitleBar $end>
            <UserName>山田 知美</UserName>
            <Avatar><Person /></Avatar>
            <TitleSlot $w={32}><Pen /></TitleSlot>
            <TitleSlot $w={42}><Display /></TitleSlot>
            <TitleSlot $w={36} $ml={8}><Minus /></TitleSlot>
          </TitleBar>
          <TabRow $pad={20}>
            <Tab $w={56}>ot</Tab>
            <Tab $w={28}><TabIcon><Lens /></TabIcon></Tab>
            <Tab>検索</Tab>
            <ShareButton><ShareIcon />共有</ShareButton>
          </TabRow>
          <Ribbon>
            <Group $w={101} $sep>
              <GroupBody>
                <Rows>
                  <RowLine><Combo $w={92}><span /><Chev /></Combo></RowLine>
                  <RowLine>
                    <Comma>,</Comma>
                    <ToolSep />
                    <Tool $w={36}><Decimals /></Tool>
                  </RowLine>
                </Rows>
              </GroupBody>
              <GroupLabel $pad={24}>
                「
                <Launcher><Launch /></Launcher>
              </GroupLabel>
            </Group>
            <Group $w={190} $sep>
              <GroupBody $pad={8}>
                <BigButton $w={51} $on>
                  <BigIcon><CondIcon /></BigIcon>
                  条件付き
                  <br />
                  書式 ⌄
                </BigButton>
                <BigButton $w={68}>
                  <BigIcon><TableIcon /></BigIcon>
                  <Tight $s={-1.3}>テーブルとして</Tight>
                  書式設定 ⌄
                </BigButton>
                <BigButton $w={54}>
                  <BigIcon><StyleIcon /></BigIcon>
                  <Tight $s={-0.8}>セルの</Tight>
                  <Tight $s={-0.8}>スタイル ⌄</Tight>
                </BigButton>
              </GroupBody>
              <GroupLabel />
            </Group>
            <Group $w={84} $sep>
              <GroupBody $pad={10}>
                <Stack>
                  <StackRow><InsertIcon />挿入<Tool $w={30}><Chev /></Tool></StackRow>
                  <StackRow><DeleteIcon />削除<Tool $w={30}><Chev /></Tool></StackRow>
                  <StackRow><FormatIcon />書式<Tool $w={16}><Chev /></Tool></StackRow>
                </Stack>
              </GroupBody>
              <GroupLabel>セル</GroupLabel>
            </Group>
            <Group $w={159} $sep>
              <GroupBody $pad={12}>
                <ToolCol $gap={8} $top={4} $w={32}>
                  <ToolLine><Sigma /><Chev /></ToolLine>
                  <ToolLine><FillDown /><Chev /></ToolLine>
                  <ToolLine><Eraser /><Chev /></ToolLine>
                </ToolCol>
                <BigButton $w={66}>
                  <BigIcon><SortIcon /></BigIcon>
                  並べ替えと
                  <br />
                  <Tight $s={-0.5}>フィルター ⌄</Tight>
                </BigButton>
                <BigButton $w={38}>
                  <BigIcon><Lens s={30} c="#444" w={0.7} /></BigIcon>
                  検索と
                  <br />
                  選択 ⌄
                </BigButton>
              </GroupBody>
              <GroupLabel>編集</GroupLabel>
            </Group>
          </Ribbon>
          <FormulaBar>
            <FormulaInput />
          </FormulaBar>
          <RightSheet />
        </Pane>
      </Window>

      <Menu>
        <BigItem>
          <Table10 kind="le" />
          <ItemText>セルの強調表示ルール(<u>H</u>)</ItemText>
          <ChevR />
        </BigItem>
        <BigItem $line>
          <Table10 kind="ten" />
          <ItemText>上位/下位ルール(<u>T</u>)</ItemText>
          <ChevR />
        </BigItem>
        <BigItem $on>
          <BarIcon />
          <ItemText>データ バー(<u>D</u>)</ItemText>
          <ChevR />
        </BigItem>
        <BigItem>
          <ScaleIcon />
          <ItemText>カラー スケール(<u>S</u>)</ItemText>
          <ChevR />
        </BigItem>
        <BigItem>
          <SetIcon />
          <ItemText>アイコン セット(<u>I</u>)</ItemText>
          <ChevR />
        </BigItem>
        <MenuRule />
        <SmallList>
          <SmallItem><SmallIcon kind="new" /><ItemText>新しいルール(<u>N</u>)...</ItemText></SmallItem>
          <SmallItem><SmallIcon kind="clear" /><ItemText>ルールのクリア(<u>C</u>)</ItemText><ChevR /></SmallItem>
          <SmallItem><SmallIcon kind="manage" /><ItemText>ルールの管理(<u>R</u>)...</ItemText></SmallItem>
        </SmallList>
      </Menu>

      <Gallery>
        <GalleryTitle>塗りつぶし (グラデーション)</GalleryTitle>
        <Swatches>
          {GRADIENTS.map((c, i) => (
            <DataBarIcon key={c} id={`g${i}`} color={c} gradient />
          ))}
        </Swatches>
        <GalleryRule />
        <GalleryTitle>塗りつぶし (単色)</GalleryTitle>
        <Swatches>
          {GRADIENTS.map((c, i) => (
            <DataBarIcon key={c} id={`s${i}`} color={c} />
          ))}
        </Swatches>
        <GalleryRule />
        <GalleryMore>その他のルール(<u>M</u>)...</GalleryMore>
      </Gallery>

      <Layer width="902" height="663" viewBox="0 0 902 663">
        <path d={`${wave(0)}${waveBack}`} fill="#fff" />
        <path d={wave(0)} fill="none" stroke="#111" />
        <path d={wave(26)} fill="none" stroke="#111" />
        <g strokeWidth="4" strokeLinecap="butt" fill="none">
          <path d="M33 74 219 518" stroke="#3ea6e8" />
          <path d="M358 74 474 191" stroke="#d0007f" />
          <path d="M358 74 497 342" stroke="#d0007f" />
          <path d="M797 74 700 369" stroke="#d0007f" />
        </g>
      </Layer>
    </Page>
  );
}
